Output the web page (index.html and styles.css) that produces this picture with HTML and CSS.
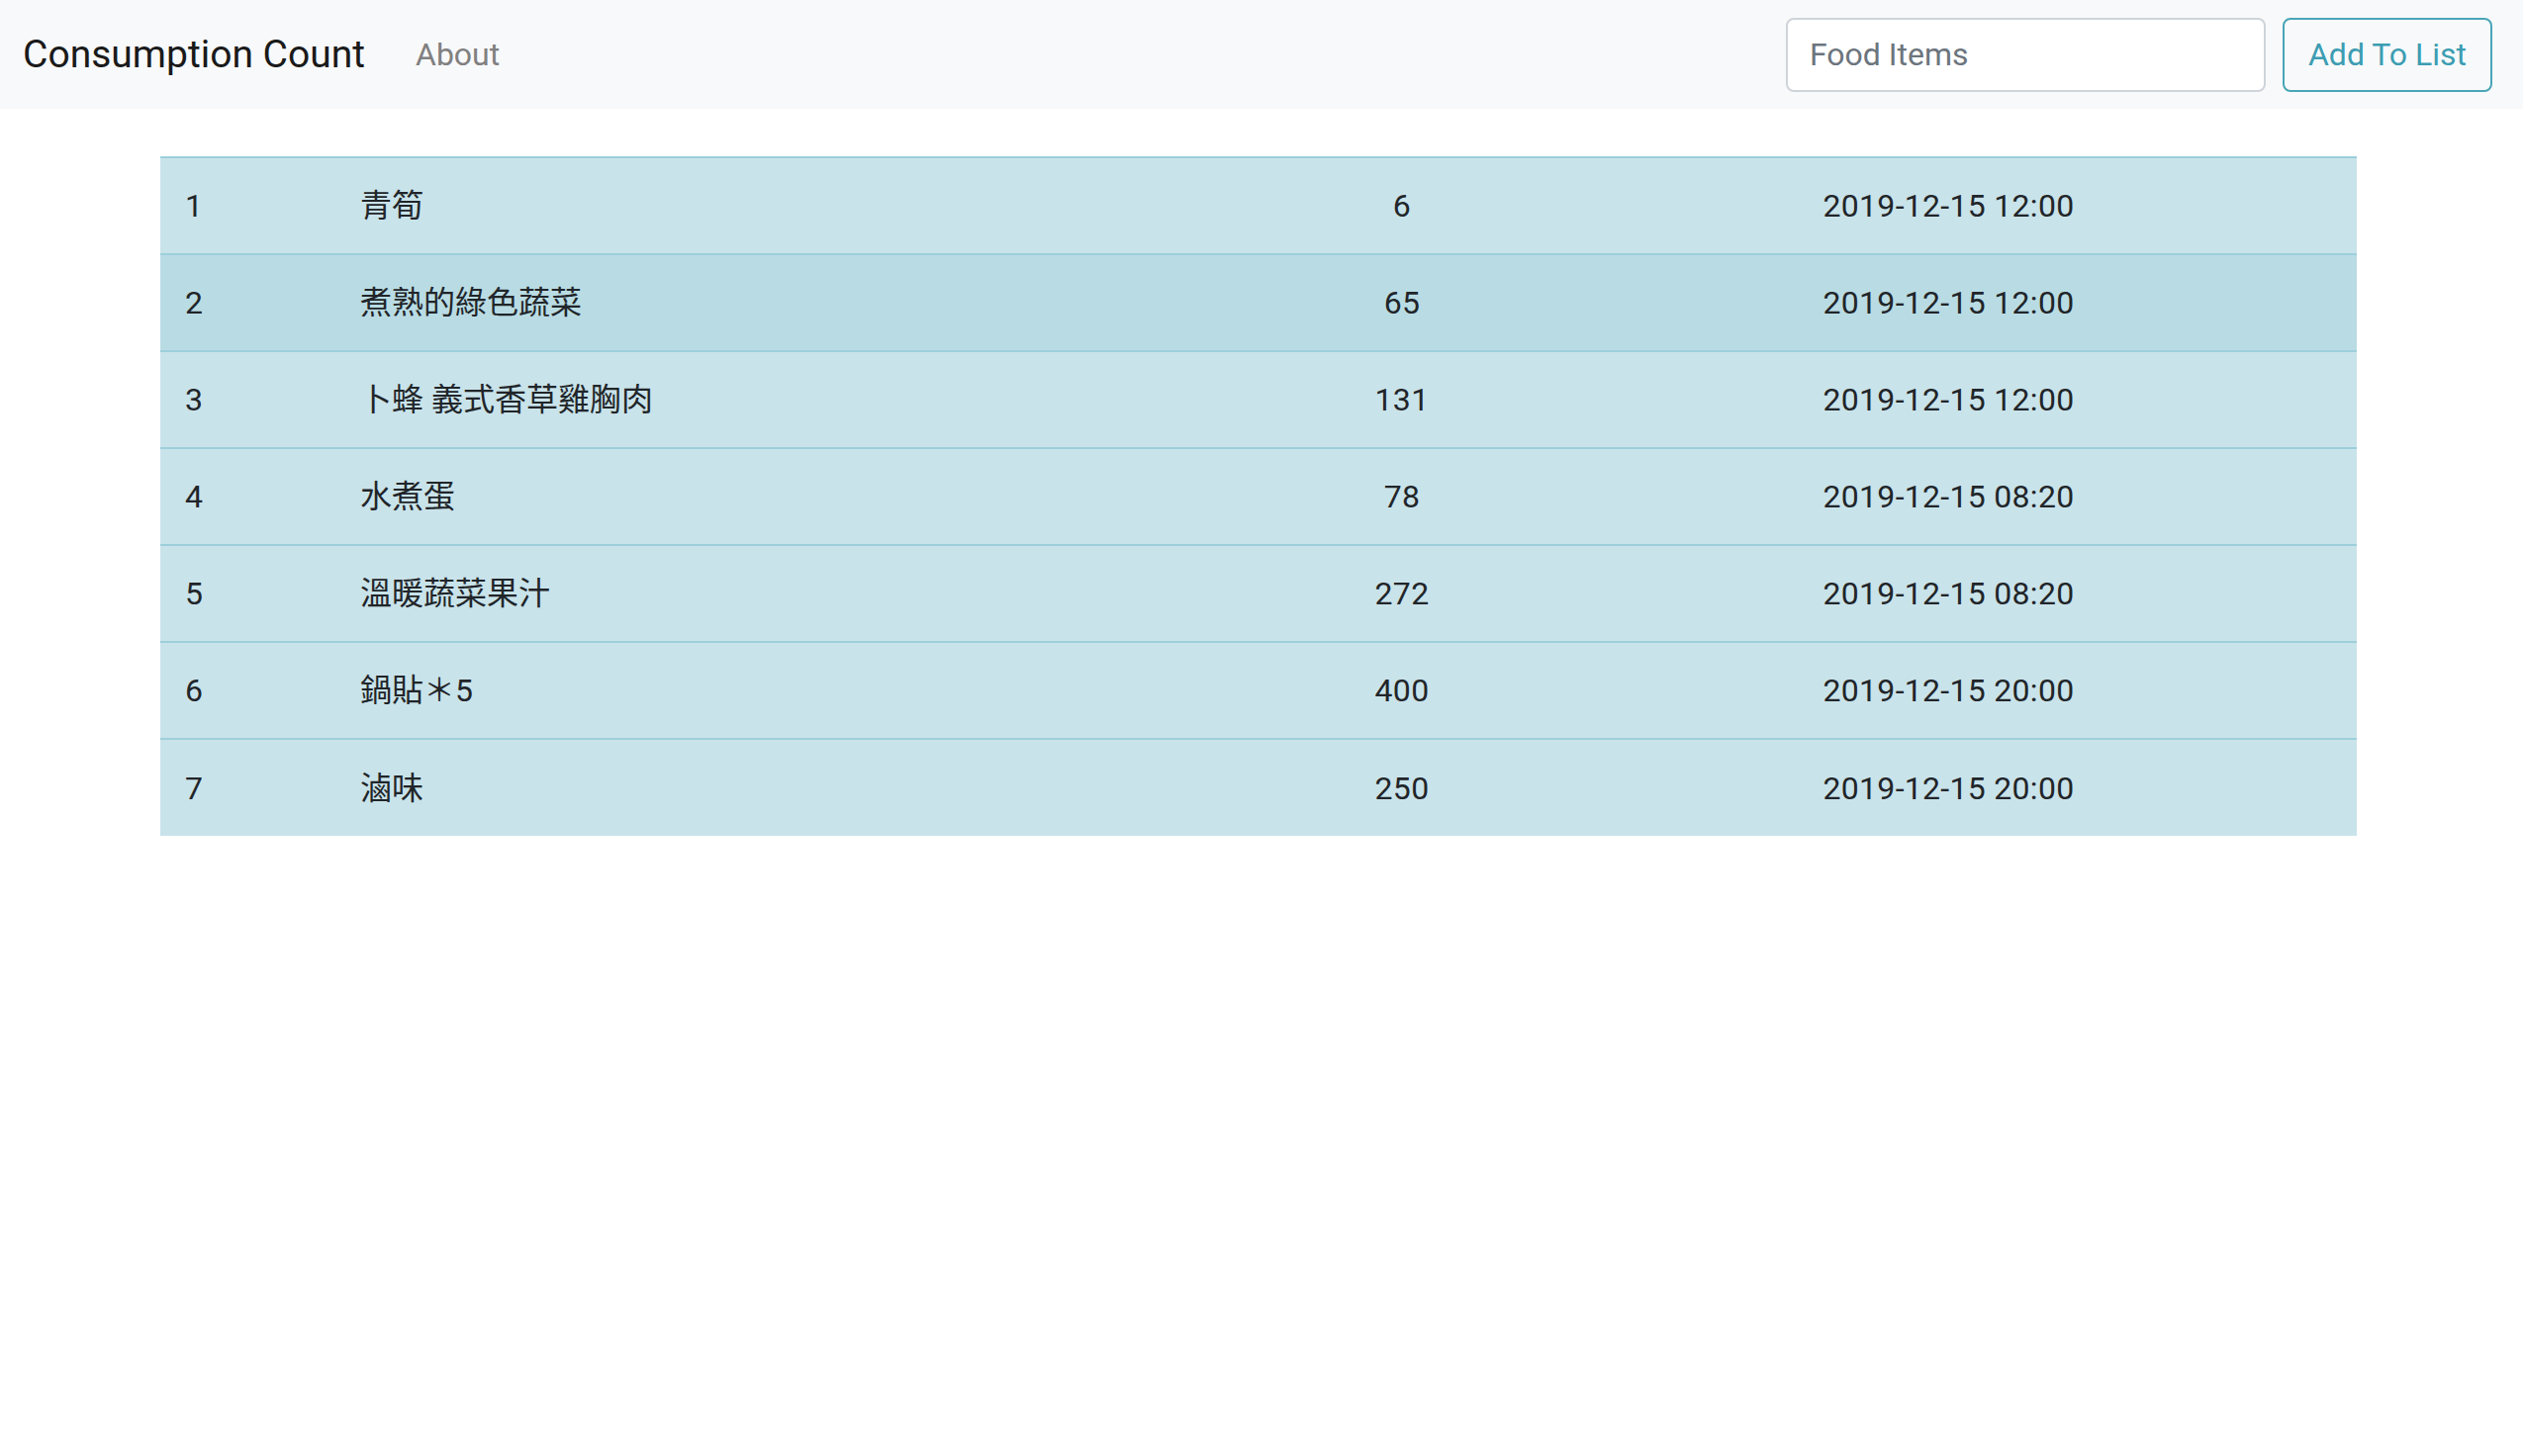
FILE: index.html
```html
<!DOCTYPE html>
<html lang="zh-Hant">
<head>
<meta charset="utf-8">
<title>Consumption Count</title>
<link rel="stylesheet" href="styles.css">
</head>
<body>
<nav class="navbar">
  <div class="nav-left">
    <a class="brand">Consumption Count</a>
    <a class="nav-link">About</a>
  </div>
  <form class="nav-form">
    <input class="food-input" type="text" placeholder="Food Items">
    <button class="add-btn" type="button">Add To List</button>
  </form>
</nav>
<main class="container">
  <table class="food-table">
    <colgroup>
      <col class="c-idx"><col class="c-name"><col class="c-cal"><col class="c-date">
    </colgroup>
    <tbody>
      <tr><td>1</td><td>青筍</td><td class="center">6</td><td class="center">2019-12-15 12:00</td></tr>
      <tr class="hover"><td>2</td><td>煮熟的綠色蔬菜</td><td class="center">65</td><td class="center">2019-12-15 12:00</td></tr>
      <tr><td>3</td><td>卜蜂 義式香草雞胸肉</td><td class="center">131</td><td class="center">2019-12-15 12:00</td></tr>
      <tr><td>4</td><td>水煮蛋</td><td class="center">78</td><td class="center">2019-12-15 08:20</td></tr>
      <tr><td>5</td><td>溫暖蔬菜果汁</td><td class="center">272</td><td class="center">2019-12-15 08:20</td></tr>
      <tr><td>6</td><td>鍋貼＊5</td><td class="center">400</td><td class="center">2019-12-15 20:00</td></tr>
      <tr><td>7</td><td>滷味</td><td class="center">250</td><td class="center">2019-12-15 20:00</td></tr>
    </tbody>
  </table>
</main>
</body>
</html>
```

FILE: styles.css
```css
* { box-sizing: border-box; }
body {
  margin: 0;
  font-family: Roboto, "Noto Sans CJK TC", sans-serif;
  font-size: 32px;
  line-height: 1.5;
  color: #212529;
  background: #fff;
}
.navbar {
  height: 110px;
  background: #f8f9fa;
  display: flex;
  align-items: center;
  justify-content: space-between;
  padding: 0 31px 0 23px;
}
.nav-left {
  display: flex;
  align-items: center;
}
.brand {
  font-size: 39px;
  color: #1a1a1a;
  margin-right: 51px;
}
.nav-link {
  color: #808080;
  font-size: 32px;
}
.nav-form {
  display: flex;
  align-items: center;
  gap: 17px;
}
.food-input {
  width: 485px;
  height: 75px;
  border: 2px solid #ced4da;
  border-radius: 8px;
  padding: 0 22px;
  font-family: Roboto, "Noto Sans CJK TC", sans-serif;
  font-size: 32px;
  color: #495057;
  background: #fff;
  outline: none;
}
.food-input::placeholder { color: #6c757d; }
.add-btn {
  height: 75px;
  width: 212px;
  border: 2px solid #4aa5b8;
  border-radius: 8px;
  background: transparent;
  color: #3c9db2;
  font-family: Roboto, "Noto Sans CJK TC", sans-serif;
  font-size: 32px;
  padding: 0;
}
.container {
  width: 2220px;
  margin: 48px 0 0 162px;
}
.food-table {
  width: 100%;
  border-collapse: collapse;
  table-layout: fixed;
  background: #c9e3ea;
}
.c-idx { width: 177px; }
.c-name { width: 938px; }
.c-cal { width: 276px; }
.food-table td {
  padding: 24px 24px 24px 25px;
  height: 98px;
  border-top: 2px solid #9ccfdb;
  vertical-align: middle;
  white-space: nowrap;
}
.food-table .center { text-align: center; letter-spacing: 0.3px; padding-left: 27px; padding-right: 23px; }
.food-table tr.hover { background: #b9dce4; }
```
